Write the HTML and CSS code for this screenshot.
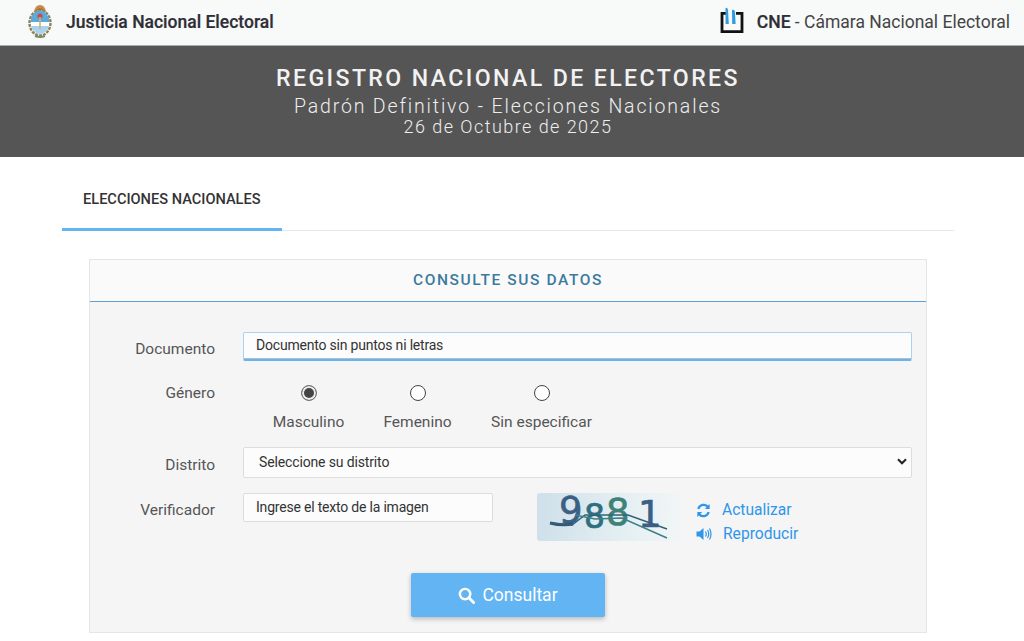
FILE: index.html
```html
<!DOCTYPE html>
<html lang="es">
<head>
<meta charset="utf-8">
<title>Registro Nacional de Electores</title>
<link rel="stylesheet" href="styles.css">
</head>
<body>
<header class="topbar">
  <div class="brand brand-left">
    <svg class="escudo" viewBox="0 0 26 34" width="26" height="34" aria-hidden="true">
      <path d="M7 8 Q8 1 13 1 Q18 1 19 8Z" fill="#c98a4a"/>
      <path d="M9.5 6 Q13 2.5 16.5 6Z" fill="#b5602e"/>
      <ellipse cx="13" cy="19" rx="10.5" ry="12.5" fill="#fff" stroke="#8c8458" stroke-width="2.4" stroke-dasharray="3 1"/>
      <path d="M3.6 18 A9.4 11.4 0 0 1 22.4 18Z" fill="#5ea9dc"/>
      <path d="M4 22 A9.4 11.4 0 0 0 22 22Z" fill="#a9d2ec"/>
      <circle cx="13" cy="12" r="2.6" fill="#c0504a"/>
      <rect x="12.2" y="13" width="1.6" height="12" fill="#c9b27a"/>
      <path d="M8 32 Q13 34 18 32" stroke="#7d8a70" stroke-width="2" fill="none"/>
    </svg>
    <span class="brand-bold">Justicia Nacional Electoral</span>
  </div>
  <div class="brand brand-right">
    <svg class="cne-logo" viewBox="0 0 26 28" width="26" height="28" aria-hidden="true">
      <path d="M9 7.3H3V25.7H23V7.3H17" fill="none" stroke="#111" stroke-width="2.8"/>
      <path d="M6.5 2 Q8.5 1 9 4 L9.8 18H6.6Z" fill="#2f9de0"/>
      <path d="M13 4 Q15.5 3 16 6 L16.6 18H13.2Z" fill="#2f9de0"/>
    </svg>
    <span class="brand-text"><b class="brand-bold">CNE</b> - Cámara Nacional Electoral</span>
  </div>
</header>

<section class="banner">
  <h1 class="banner-title">REGISTRO NACIONAL DE ELECTORES</h1>
  <p class="banner-sub">Padrón Definitivo - Elecciones Nacionales</p>
  <p class="banner-date">26 de Octubre de 2025</p>
</section>

<main class="content">
  <nav class="tabs">
    <a class="tab">ELECCIONES NACIONALES</a>
  </nav>

  <section class="panel">
    <h2 class="panel-head">CONSULTE SUS DATOS</h2>
    <form class="panel-body">
      <div class="row row-doc">
        <label class="label label-doc">Documento</label>
        <div class="field fake-input focused">Documento sin puntos ni letras</div>
      </div>
      <div class="row row-gen">
        <label class="label label-gen">Género</label>
        <div class="radios">
          <div class="radio radio-m"><span class="dot on"></span><span>Masculino</span></div>
          <div class="radio radio-f"><span class="dot"></span><span>Femenino</span></div>
          <div class="radio radio-s"><span class="dot"></span><span>Sin especificar</span></div>
        </div>
      </div>
      <div class="row row-dist">
        <label class="label label-dist">Distrito</label>
        <div class="field fake-select">
          <span>Seleccione su distrito</span>
          <svg viewBox="0 0 10 7" width="10" height="7" aria-hidden="true"><path d="M1 1.3 5 5.3 9 1.3" fill="none" stroke="#222" stroke-width="2"/></svg>
        </div>
      </div>
      <div class="row row-ver">
        <label class="label label-ver">Verificador</label>
        <div class="fake-input small">Ingrese el texto de la imagen</div>
        <svg class="captcha" viewBox="0 0 143 48" width="143" height="48" role="img" aria-label="988 1">
          <defs>
            <linearGradient id="capbg" x1="0" x2="1" y1="0" y2="0">
              <stop offset="0" stop-color="#cfe0ea"/><stop offset="0.6" stop-color="#e4eff2"/><stop offset="1" stop-color="#f1f5f5"/>
            </linearGradient>
          </defs>
          <rect width="143" height="48" rx="3" fill="url(#capbg)"/>
          <text x="22" y="30" class="cap c1">9</text>
          <text x="47" y="35" class="cap-small c2">8</text>
          <text x="69" y="32" class="cap c3">8</text>
          <text x="101" y="34" class="cap c4">1</text>
          <path d="M13 30 Q25 33 36 31" fill="none" stroke="#2f5575" stroke-width="3"/>
          <path d="M13 30 L35 32 L48 22 L91 22 L130 36" fill="none" stroke="#33607a" stroke-width="1.5"/>
          <path d="M38 22 L58 26 L85 25 L130 45" fill="none" stroke="#3d8088" stroke-width="1.5"/>
        </svg>
        <div class="cap-links">
          <a class="cap-link link-a">
            <svg viewBox="0 0 16 16" width="15" height="15" aria-hidden="true"><path d="M2.5 6.5A6 6 0 0 1 13 4.2" fill="none" stroke="#2f96ec" stroke-width="2.4"/><path d="M14.6 1V6.5H9.4Z" fill="#2f96ec"/><path d="M13.5 9.5A6 6 0 0 1 3 11.8" fill="none" stroke="#2f96ec" stroke-width="2.4"/><path d="M1.4 15V9.5H6.6Z" fill="#2f96ec"/></svg>
            <span>Actualizar</span>
          </a>
          <a class="cap-link link-r">
            <svg viewBox="0 0 16 14" width="16" height="14" aria-hidden="true"><path d="M0.5 4.5H3.5L7.5 1V13L3.5 9.5H0.5Z" fill="#2f96ec"/><path d="M9.5 4.5Q11 7 9.5 9.5M11.5 3Q14 7 11.5 11M13.5 1.5Q16.5 7 13.5 12.5" fill="none" stroke="#2f96ec" stroke-width="1.2"/></svg>
            <span>Reproducir</span>
          </a>
        </div>
      </div>
      <div class="actions">
        <button type="button" class="btn">
          <svg viewBox="0 0 18 18" width="17" height="17" aria-hidden="true"><circle cx="7.5" cy="7.5" r="5.5" fill="none" stroke="#fff" stroke-width="2.6"/><path d="M11.5 11.5 16.5 16.5" stroke="#fff" stroke-width="3" stroke-linecap="round"/></svg>
          <span>Consultar</span>
        </button>
      </div>
    </form>
  </section>
</main>
</body>
</html>
```

FILE: styles.css
```css
* { box-sizing: border-box; }
html, body { height: 100%; }
body {
  margin: 0;
  background: #fff;
  font-family: Roboto, "Liberation Sans", sans-serif;
  color: #444;
  overflow: hidden;
}
.topbar {
  height: 46px;
  display: flex;
  justify-content: space-between;
  align-items: center;
  background: #f8f9f9;
  padding: 0 14px 2px 27px;
  border-bottom: 1px solid #aaa;
}
.brand { display: flex; align-items: center; color: #333; font-size: 17.5px; }
.brand-bold { font-weight: 500; color: #2e2e36; -webkit-text-stroke: 0.2px #2e2e36; }
.brand-left { gap: 13px; }
.escudo { margin-top: -1px; }
.brand-right { gap: 12px; }
.cne-logo { margin-top: -3px; }
.brand-text { color: #444; }
.banner {
  height: 111px;
  background: #555;
  color: #eee;
  text-align: center;
  padding: 19px 8px 0 0;
}
.banner-title {
  margin: 0;
  font-size: 23.1px;
  line-height: 27px;
  font-weight: 500;
  letter-spacing: 2.4px;
  color: #f2f2f2;
}
.banner-sub {
  margin: 4px 0 0;
  font-size: 19.5px;
  line-height: 22px;
  font-weight: 300;
  letter-spacing: 1.85px;
}
.banner-date {
  margin: -1px 0 0;
  font-size: 18px;
  line-height: 20px;
  font-weight: 300;
  letter-spacing: 1.45px;
}
.content { padding: 0 70px 0 62px; }
.tabs {
  height: 74px;
  border-bottom: 1px solid #e8e8e8;
  display: flex;
}
.tab {
  width: 220px;
  height: 74px;
  padding: 34px 0 0 21px;
  font-size: 14.6px;
  line-height: 17px;
  font-weight: 500;
  color: #333;
  border-bottom: 3px solid #62b4f3;
}
.panel {
  margin: 28px 27px 0;
  border: 1px solid #e6e6e6;
  background: #f5f5f5;
}
.panel-head {
  margin: 0;
  height: 42px;
  background: #fafafa;
  border-bottom: 1px solid #5b9fd8;
  text-align: center;
  font-size: 15.5px;
  line-height: 41px;
  font-weight: 500;
  letter-spacing: 1.6px;
  color: #3d7a9e;
}
.panel-body {
  height: 330px;
  padding: 30px 14px 0 0;
  display: flex;
  flex-direction: column;
}
.row { display: flex; }
.label {
  width: 125px;
  text-align: right;
  font-size: 15.5px;
  line-height: 18px;
  color: #555;
  flex: none;
}
.field, .fake-input {
  font-size: 14px;
  letter-spacing: -0.2px;
  color: #333;
  background: #fcfcfc;
  border: 1px solid #ddd;
  border-radius: 2px;
}
.row-doc { height: 29px; }
.label-doc { padding-top: 8px; }
.fake-input {
  margin-left: 28px;
  display: flex;
  align-items: center;
  padding: 0 0 2px 12px;
}
.focused {
  width: 669px;
  height: 29px;
  border-color: #a9d3f5;
  border-bottom: 2px solid #62b4f3;
  box-shadow: inset 0 -1px 0 #bbb;
}
.row-gen { margin-top: 22px; height: 42px; }
.label-gen { padding-top: 1px; }
.radios { display: flex; margin-left: 28px; }
.radio {
  display: flex;
  flex-direction: column;
  align-items: center;
  gap: 12px;
  font-size: 15.5px;
  line-height: 18px;
  color: #555;
}
.radio-m { margin-left: 29px; width: 73px; }
.radio-f { margin-left: 38px; width: 69px; }
.radio-s { margin-left: 38px; width: 103px; }
.dot {
  flex: none;
  width: 16px;
  height: 16px;
  margin-top: 2px;
  border: 1.5px solid #444;
  border-radius: 50%;
  background: #fff;
}
.dot.on {
  border-color: #777;
  background: #444;
  box-shadow: inset 0 0 0 2px #eee;
}
.row-dist { margin-top: 22px; height: 31px; }
.label-dist { padding-top: 9px; }
.fake-select {
  width: 669px;
  height: 31px;
  margin-left: 28px;
  display: flex;
  align-items: center;
  justify-content: space-between;
  padding: 0 4px 2px 15px;
  letter-spacing: -0.14px;
}
.row-ver { margin-top: 15px; height: 48px; }
.label-ver { padding-top: 8px; }
.small {
  width: 250px;
  height: 29px;
}
.captcha { margin-left: 44px; flex: none; overflow: visible; }
.cap, .cap-small { font-family: "DejaVu Sans", sans-serif; stroke-width: 0.7px; }
.cap { font-size: 37px; }
.cap-small { font-size: 33px; }
.c1 { fill: #3b5f86; stroke: #3b5f86; }
.c2 { fill: #2f6f80; stroke: #2f6f80; }
.c3 { fill: #3f8279; stroke: #3f8279; }
.c4 { fill: #3b5f86; stroke: #3b5f86; }
.cap-links {
  margin-left: 16px;
  display: flex;
  flex-direction: column;
  gap: 6px;
  padding-top: 8px;
  font-size: 15.6px;
  line-height: 18px;
  color: #2f96ec;
}
.cap-link { display: flex; align-items: center; }
.link-a { gap: 11px; }
.link-r { gap: 11px; }
.actions { margin-top: 32px; display: flex; justify-content: center; }
.btn {
  width: 194px;
  height: 44px;
  margin-left: 14px;
  border: 0;
  border-radius: 2px;
  background: #62b4f3;
  color: #fff;
  font: 400 17.5px Roboto, sans-serif;
  display: flex;
  align-items: center;
  justify-content: center;
  gap: 7px;
  box-shadow: 0 2px 5px rgba(0,0,0,.25);
}
```
